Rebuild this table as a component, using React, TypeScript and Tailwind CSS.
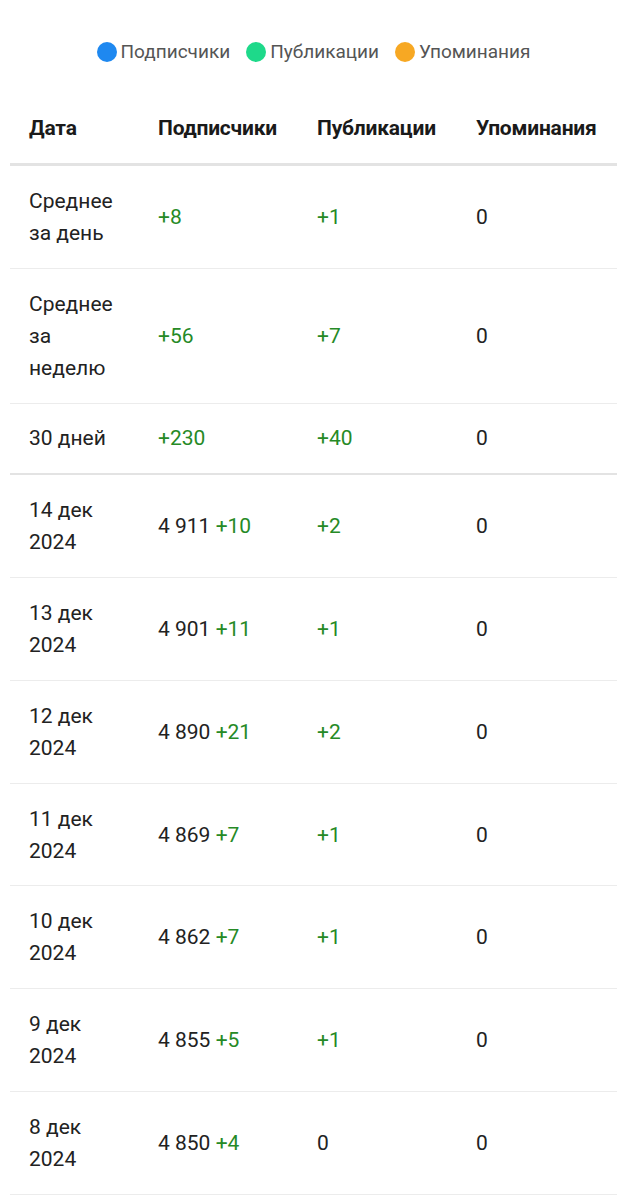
const rows: { date: string; subs?: string; subsDelta: string; pubs: string; ment: string; thick?: boolean }[] = [
  { date: 'Среднее за день', subsDelta: '+8', pubs: '+1', ment: '0' },
  { date: 'Среднее за неделю', subsDelta: '+56', pubs: '+7', ment: '0' },
  { date: '30 дней', subsDelta: '+230', pubs: '+40', ment: '0', thick: true },
  { date: '14 дек 2024', subs: '4 911', subsDelta: '+10', pubs: '+2', ment: '0' },
  { date: '13 дек 2024', subs: '4 901', subsDelta: '+11', pubs: '+1', ment: '0' },
  { date: '12 дек 2024', subs: '4 890', subsDelta: '+21', pubs: '+2', ment: '0' },
  { date: '11 дек 2024', subs: '4 869', subsDelta: '+7', pubs: '+1', ment: '0' },
  { date: '10 дек 2024', subs: '4 862', subsDelta: '+7', pubs: '+1', ment: '0' },
  { date: '9 дек 2024', subs: '4 855', subsDelta: '+5', pubs: '+1', ment: '0' },
  { date: '8 дек 2024', subs: '4 850', subsDelta: '+4', pubs: '0', ment: '0' },
];

function Num({ v }: { v: string }) {
  return <span className={v.startsWith('+') ? 'text-[#268a26]' : ''}>{v}</span>;
}

export default function App() {
  return (
    <div className="min-h-[1200px] bg-white font-['Roboto',sans-serif] text-[#222]">
      <div className="flex justify-center items-center gap-[16px] pt-[40px] text-[19px] text-[#555] leading-[24px]">
        <div className="flex items-center gap-[4px]">
          <span className="w-[20px] h-[20px] rounded-full bg-[#1e88f0]" />
          Подписчики
        </div>
        <div className="flex items-center gap-[4px]">
          <span className="w-[20px] h-[20px] rounded-full bg-[#1ed98a]" />
          Публикации
        </div>
        <div className="flex items-center gap-[4px]">
          <span className="w-[20px] h-[20px] rounded-full bg-[#f7a823]" />
          Упоминания
        </div>
      </div>

      <div className="mx-[10px] mt-[48px] text-[21px] leading-[32px]">
        <div className="grid grid-cols-[148px_159px_159px_1fr] pb-[19px] border-b-[3px] border-[#e3e3e3] font-bold text-[#1a1a1a] tracking-[-0.2px]">
          <div className="pl-[19px]">Дата</div>
          <div>Подписчики</div>
          <div>Публикации</div>
          <div>Упоминания</div>
        </div>
        {rows.map((r) => (
          <div
            key={r.date}
            className={`grid grid-cols-[148px_159px_159px_1fr] items-center py-[18.9px] ${r.thick ? 'border-b-[2px] border-[#e3e3e3]' : 'border-b border-[#ececec]'}`}
          >
            <div className="pl-[19px] pr-[30px]">{r.date}</div>
            <div>
              {r.subs && <span>{r.subs} </span>}
              <Num v={r.subsDelta} />
            </div>
            <div><Num v={r.pubs} /></div>
            <div><Num v={r.ment} /></div>
          </div>
        ))}
      </div>
    </div>
  );
}
